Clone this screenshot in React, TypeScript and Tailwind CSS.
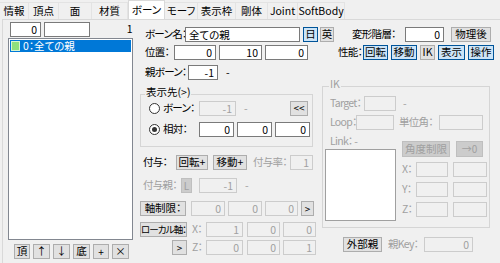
import React from "react";

type Tab = { label: string; w: string };

const tabs: Tab[] = [
  { label: "情報", w: "w-[29px]" },
  { label: "頂点", w: "w-[30px]" },
  { label: "面", w: "w-[33px]" },
  { label: "材質", w: "w-[36px]" },
  { label: "ボーン", w: "w-[37px]" },
  { label: "モーフ", w: "w-[33px]" },
  { label: "表示枠", w: "w-[38px]" },
  { label: "剛体", w: "w-[32px]" },
  { label: "Joint", w: "w-[30px]" },
  { label: "SoftBody", w: "w-[47px]" },
];

interface BtnProps {
  children: React.ReactNode;
  className?: string;
  active?: boolean;
  disabled?: boolean;
}

const Btn: React.FC<BtnProps> = ({ children, className = "", active = false, disabled = false }) => {
  const tone = active
    ? "bg-[#cce4f7] border-[#005499] text-black"
    : disabled
    ? "bg-[#cccccc] border-[#bfbfbf] text-[#a0a0a0]"
    : "bg-[#e1e1e1] border-[#adadad] text-black";
  return (
    <button
      type="button"
      className={`h-[15px] shrink-0 border ${tone} flex items-center justify-center leading-none whitespace-nowrap ${className}`}
    >
      {children}
    </button>
  );
};

interface FieldProps {
  value?: string;
  className?: string;
  disabled?: boolean;
  left?: boolean;
}

const Field: React.FC<FieldProps> = ({ value = "", className = "", disabled = false, left = false }) => (
  <input
    readOnly
    value={value}
    className={`h-[15px] shrink-0 border px-[3px] leading-none text-[10.5px] outline-none ${
      left ? "text-left" : "text-right"
    } ${
      disabled
        ? "bg-[#f0f0f0] border-[#cccccc] text-[#a0a0a0]"
        : "bg-white border-[#7a7a7a] text-black"
    } ${className}`}
  />
);

const Lbl: React.FC<{ children: React.ReactNode; className?: string; gray?: boolean }> = ({
  children,
  className = "",
  gray = false,
}) => (
  <span
    className={`shrink-0 whitespace-nowrap leading-none tracking-[-0.7px] ${
      gray ? "text-[#a0a0a0]" : "text-black"
    } ${className}`}
  >
    {children}
  </span>
);

const Radio: React.FC<{ checked?: boolean; className?: string }> = ({ checked = false, className = "" }) => (
  <span
    className={`w-[11px] h-[11px] shrink-0 rounded-full border border-[#333333] bg-white flex items-center justify-center ${className}`}
  >
    {checked && <span className="w-[5px] h-[5px] rounded-full bg-[#333333]" />}
  </span>
);

export default function App() {
  return (
    <div className="w-[500px] h-[263px] overflow-hidden bg-[#f0f0f0] text-[10.5px] text-black font-['Noto_Sans_CJK_JP',sans-serif] [font-feature-settings:'palt'] flex flex-col">
      {/* tabs */}
      <div className="flex h-[19px] shrink-0 items-end">
        {tabs.map((t) => {
          const sel = t.label === "ボーン";
          return (
            <div
              key={t.label}
              className={`${t.w} flex items-center justify-center leading-none ${
                sel
                  ? "h-[19px] bg-white border-x border-t border-[#d9d9d9]"
                  : "h-[17px] bg-[#f0f0f0] border-r border-t border-[#e3e3e3]"
              }`}
            >
              {t.label}
            </div>
          );
        })}
      </div>

      <div className="flex flex-1 ml-[2px] border-l border-t border-[#d9d9d9]">
        {/* left: bone list */}
        <div className="w-[135px] shrink-0 flex flex-col">
          <div className="flex items-center mt-[2px] h-[15px]">
            <Field value="0" className="ml-[7px] w-[31px]" />
            <Field value="" className="ml-[3px] w-[46px]" />
            <Lbl className="ml-auto mr-[6px]">1</Lbl>
          </div>
          <div className="mt-[1px] ml-[5px] w-[125px] h-[202px] border border-[#828790] bg-white p-[1px]">
            <div className="h-[12px] bg-[#0078d7] flex items-center">
              <span className="w-[9px] h-[10px] bg-[#8fe07c] border border-[#d8f5d0] ml-[1px]" />
              <span className="ml-[3px] text-white leading-none">0：全ての親</span>
            </div>
          </div>
          <div className="mt-[4px] ml-[11px] flex gap-[3px]">
            <Btn className="w-[16px] h-[14px]">頂</Btn>
            <Btn className="w-[17px] h-[14px]">↑</Btn>
            <Btn className="w-[17px] h-[14px]">↓</Btn>
            <Btn className="w-[17px] h-[14px]">底</Btn>
            <Btn className="w-[16px] h-[14px] text-[10px]">+</Btn>
            <Btn className="w-[17px] h-[14px]">×</Btn>
          </div>
        </div>

        {/* right: bone properties */}
        <div className="flex-1 flex flex-col">
          <div className="flex items-center mt-[7px] h-[15px]">
            <Lbl className="ml-[7px] w-[40px]">ボーン名：</Lbl>
            <Field value="全ての親" left className="w-[115px]" />
            <Btn active className="ml-[3px] w-[15px]">日</Btn>
            <Btn className="ml-[2px] w-[14px]">英</Btn>
            <Lbl className="ml-[18px] w-[53px]">変形階層：</Lbl>
            <Field value="0" className="w-[39px]" />
            <Btn className="ml-[7px] w-[40px]">物理後</Btn>
          </div>

          <div className="flex items-center mt-[3px] h-[15px]">
            <Lbl className="ml-[7px] w-[29px]">位置：</Lbl>
            <Field value="0" className="w-[42px]" />
            <Field value="10" className="ml-[3px] w-[43px]" />
            <Field value="0" className="ml-[3px] w-[43px]" />
            <Lbl className="ml-[30px] w-[25px]">性能：</Lbl>
            <Btn active className="w-[25px]">回転</Btn>
            <Btn active className="ml-[3px] w-[26px]">移動</Btn>
            <Btn className="ml-[3px] w-[15px]">IK</Btn>
            <Btn active className="ml-[3px] w-[27px]">表示</Btn>
            <Btn active className="ml-[3px] w-[26px]">操作</Btn>
          </div>

          <div className="flex flex-1">
            {/* middle column */}
            <div className="w-[180px] shrink-0 flex flex-col">
              <div className="flex items-center mt-[5px] h-[15px]">
                <Lbl className="ml-[7px] w-[43px]">親ボーン：</Lbl>
                <Field value="-1" className="w-[30px]" />
                <Lbl className="ml-[8px]">-</Lbl>
              </div>

              <div className="relative mt-[14px] ml-[2px] w-[173px] h-[53px] border border-[#d5d5d5]">
                <span className="absolute -top-[8px] left-[4px] bg-[#f0f0f0] px-[1px] leading-none">表示先(&gt;)</span>
                <div className="flex items-center mt-[6px] h-[14px]">
                  <Radio className="ml-[8px]" />
                  <Lbl className="ml-[3px] w-[36px]">ボーン：</Lbl>
                  <Field value="-1" disabled className="w-[37px]" />
                  <Lbl gray className="ml-[8px]">-</Lbl>
                  <Btn className="ml-auto mr-[4px] w-[18px] h-[14px] text-[10px]">&lt;&lt;</Btn>
                </div>
                <div className="flex items-center mt-[7px] h-[14px]">
                  <Radio checked className="ml-[8px]" />
                  <Lbl className="ml-[3px] w-[36px]">相対：</Lbl>
                  <Field value="0" className="w-[35px]" />
                  <Field value="0" className="ml-[3px] w-[35px]" />
                  <Field value="0" className="ml-[3px] w-[35px]" />
                </div>
              </div>

              <div className="flex items-center mt-[8px] h-[15px]">
                <Lbl className="ml-[5px] w-[33px]">付与：</Lbl>
                <Btn className="w-[32px]">回転+</Btn>
                <Btn className="ml-[5px] w-[34px]">移動+</Btn>
                <Lbl gray className="ml-[6px] w-[37px]">付与率：</Lbl>
                <Field value="1" disabled className="w-[23px]" />
              </div>

              <div className="flex items-center mt-[8px] h-[15px]">
                <Lbl gray className="ml-[5px] w-[38px]">付与親：</Lbl>
                <Btn disabled className="w-[11px] text-[10px]">L</Btn>
                <Field value="-1" disabled className="ml-[7px] w-[38px]" />
                <Lbl gray className="ml-[8px]">-</Lbl>
              </div>

              <div className="flex items-center mt-[8px] h-[15px]">
                <Btn className="ml-[2px] w-[46px]">軸制限：</Btn>
                <Field value="0" disabled className="ml-[5px] w-[34px]" />
                <Field value="0" disabled className="ml-[3px] w-[34px]" />
                <Field value="0" disabled className="ml-[3px] w-[33px]" />
                <Btn className="ml-[3px] w-[13px] text-[10px]">&gt;</Btn>
              </div>

              <div className="flex items-center mt-[6px] h-[15px]">
                <Btn className="ml-[2px] w-[47px] px-0 text-[9.5px] tracking-[-0.9px]">ローカル軸：</Btn>
                <Lbl gray className="ml-[5px] w-[14px]">X：</Lbl>
                <Field value="1" disabled className="w-[37px]" />
                <Field value="0" disabled className="ml-[4px] w-[33px]" />
                <Field value="0" disabled className="ml-[3px] w-[33px]" />
              </div>

              <div className="flex items-center mt-[3px] h-[15px]">
                <Btn className="ml-[34px] w-[15px] text-[10px]">&gt;</Btn>
                <Lbl gray className="ml-[5px] w-[14px]">Z：</Lbl>
                <Field value="0" disabled className="w-[37px]" />
                <Field value="0" disabled className="ml-[4px] w-[33px]" />
                <Field value="1" disabled className="ml-[3px] w-[33px]" />
              </div>
            </div>

            {/* IK column */}
            <div className="flex-1 flex flex-col">
              <div className="relative mt-[26px] ml-[4px] w-[168px] h-[142px] border border-[#d5d5d5]">
                <span className="absolute -top-[8px] left-[6px] bg-[#f0f0f0] px-[1px] leading-none text-[#a0a0a0]">IK</span>
                <div className="flex items-center mt-[9px] h-[15px]">
                  <Lbl gray className="ml-[7px] w-[34px]">Target：</Lbl>
                  <Field disabled className="w-[32px]" />
                  <Lbl gray className="ml-[7px]">-</Lbl>
                </div>
                <div className="flex items-center mt-[4px] h-[15px]">
                  <Lbl gray className="ml-[7px] w-[26px]">Loop：</Lbl>
                  <Field disabled className="w-[38px]" />
                  <Lbl gray className="ml-[5px] w-[40px]">単位角：</Lbl>
                  <Field disabled className="w-[44px]" />
                </div>
                <div className="flex mt-[4px]">
                  <div className="flex flex-col">
                    <Lbl gray className="ml-[7px] h-[14px] flex items-center">Link： -</Lbl>
                    <div className="mt-[1px] ml-[2px] w-[71px] h-[72px] bg-white border border-[#a0a0a0]" />
                  </div>
                  <div className="ml-[6px] flex flex-col">
                    <div className="flex mt-[7px]">
                      <Btn disabled className="w-[48px] h-[16px]">角度制限</Btn>
                      <Btn disabled className="ml-[6px] w-[27px] h-[16px] text-[10px]">→0</Btn>
                    </div>
                    {["X：", "Y：", "Z："].map((a) => (
                      <div key={a} className="flex items-center mt-[5px] h-[15px]">
                        <Lbl gray className="w-[14px]">{a}</Lbl>
                        <Field disabled className="w-[32px]" />
                        <Field disabled className="ml-[5px] w-[34px]" />
                      </div>
                    ))}
                  </div>
                </div>
              </div>

              <div className="flex items-center mt-[9px] h-[15px]">
                <Btn className="ml-[25px] w-[39px]">外部親</Btn>
                <Lbl gray className="ml-[6px] w-[36px]">親Key：</Lbl>
                <Field value="0" disabled className="w-[49px]" />
              </div>
            </div>
          </div>
        </div>
      </div>
    </div>
  );
}
